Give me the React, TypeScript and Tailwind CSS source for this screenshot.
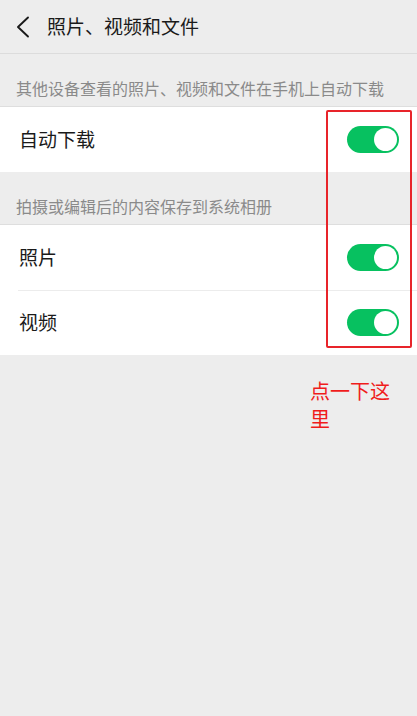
function Toggle() {
  return (
    <div className="flex h-[27px] w-[52px] items-center justify-end rounded-full bg-[#07c160] p-[2px]">
      <div className="h-[23px] w-[23px] rounded-full bg-white" />
    </div>
  );
}

function Row({ label, divider }: { label: string; divider?: boolean }) {
  return (
    <div className="relative flex h-[65px] items-center justify-between bg-white pl-[19px] pr-[18px]">
      {divider && <div className="absolute left-[18px] right-0 top-0 h-px bg-[#ececec]" />}
      <span className="text-[19px] text-[#1a1a1a]">{label}</span>
      <Toggle />
    </div>
  );
}

function SectionLabel({ children }: { children: string }) {
  return (
    <div className="flex h-[52px] items-end pb-[8px] pl-[16px] text-[16px] leading-[20px] text-[#8a8a8a]">
      {children}
    </div>
  );
}

export default function App() {
  return (
    <div
      className="relative h-[716px] w-[417px] overflow-hidden bg-[#ededed]"
      style={{ fontFamily: '"Noto Sans CJK SC", "Noto Sans", sans-serif' }}
    >
      <div className="flex h-[54px] items-center border-b border-[#dcdcdc] pl-[16px]">
        <svg width="14" height="22" viewBox="0 0 14 22" fill="none" className="text-[#1a1a1a]">
          <polyline points="12,1.5 2,11 12,20.5" stroke="currentColor" strokeWidth="1.9" strokeLinecap="round" strokeLinejoin="round" />
        </svg>
        <span className="ml-[17px] text-[19px] text-[#1a1a1a]">照片、视频和文件</span>
      </div>

      <SectionLabel>其他设备查看的照片、视频和文件在手机上自动下载</SectionLabel>
      <div className="border-t border-[#dedede]">
        <Row label="自动下载" />
      </div>

      <SectionLabel>拍摄或编辑后的内容保存到系统相册</SectionLabel>
      <div className="border-t border-[#dedede]">
        <Row label="照片" />
        <Row label="视频" divider />
      </div>

      {/* annotation overlay */}
      <div className="absolute left-[326px] top-[110px] h-[238px] w-[86px] rounded-[2px] border-[2.5px] border-[#e8242a]" />
      <div className="absolute left-[310px] top-[377px] w-[90px] text-[20px] leading-[28px] text-[#f01c1c]">
        点一下这里
      </div>
    </div>
  );
}
